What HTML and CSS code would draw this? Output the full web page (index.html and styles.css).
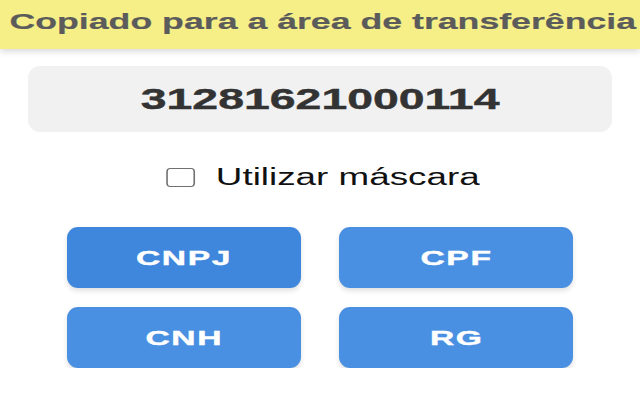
FILE: index.html
```html
<!DOCTYPE html>
<html lang="pt-BR">
<head>
<meta charset="utf-8">
<title>Gerador</title>
<link rel="stylesheet" href="styles.css">
</head>
<body>
<header class="toast"><span class="sx">Copiado para a área de transferência</span></header>
<main class="content">
  <div class="result"><span class="sx">31281621000114</span></div>
  <div class="mask-row">
    <label class="mask"><input type="checkbox" class="box"><span>Utilizar máscara</span></label>
  </div>
  <div class="buttons">
    <button class="btn active"><span class="sx">CNPJ</span></button>
    <button class="btn"><span class="sx">CPF</span></button>
    <button class="btn"><span class="sx">CNH</span></button>
    <button class="btn"><span class="sx">RG</span></button>
  </div>
</main>
</body>
</html>
```

FILE: styles.css
```css
html, body {
  margin: 0;
  padding: 0;
  background: #ffffff;
  font-family: "Liberation Sans", Arial, sans-serif;
}
.sx {
  display: inline-block;
  transform: scaleX(1.6);
  white-space: nowrap;
}
.toast {
  height: 49px;
  background: #f6ef88;
  box-shadow: 0 3px 6px rgba(0, 0, 0, 0.14);
  color: #5b5b5b;
  font-weight: bold;
  font-size: 22.3px;
  line-height: 44px;
  text-align: center;
  -webkit-text-stroke: 0.2px #5b5b5b;
}
.toast .sx {
  margin-left: 6px;
}
.content {
  padding: 17px 28px 0;
}
.result {
  height: 66px;
  border-radius: 12px;
  background: #f1f1f1;
  display: flex;
  align-items: center;
  justify-content: center;
  font-size: 29px;
  font-weight: bold;
  color: #333333;
  -webkit-text-stroke: 0.4px #333333;
}
.mask-row {
  margin-top: 32px;
  display: flex;
  justify-content: center;
}
.mask {
  display: inline-flex;
  align-items: center;
  gap: 13px;
  transform: scaleX(1.6);
  font-size: 23px;
  color: #111111;
  margin-left: 6px;
}
.box {
  appearance: none;
  -webkit-appearance: none;
  margin: 0;
  width: 18px;
  height: 19px;
  box-sizing: border-box;
  border: 1.3px solid #707070;
  border-radius: 2.5px / 4px;
  background: #ffffff;
}
.buttons {
  margin: 36px 39px 0;
  display: grid;
  grid-template-columns: 1fr 1fr;
  column-gap: 38px;
  row-gap: 19px;
}
.btn {
  height: 61px;
  border: none;
  border-radius: 11px;
  background: #4a90e2;
  color: #ffffff;
  font-family: "Liberation Sans", Arial, sans-serif;
  font-weight: bold;
  font-size: 21px;
  letter-spacing: 1px;
  box-shadow: 0 3px 5px rgba(0, 0, 0, 0.12);
  padding: 0;
  -webkit-text-stroke: 0.4px #ffffff;
}
.btn .sx {
  margin-right: -1px;
}
.btn.active {
  background: #3f87dc;
}
```
